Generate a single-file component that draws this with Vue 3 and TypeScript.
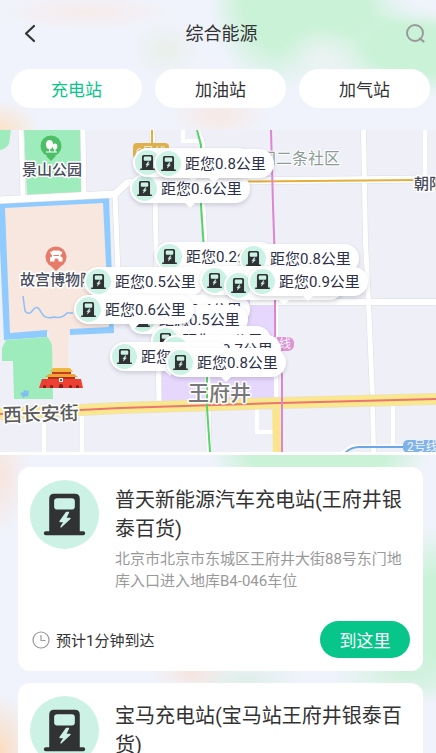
<script setup lang="ts">
import { ref } from 'vue'

interface Marker {
  x: number
  y: number
  distance: string
}

interface Station {
  name: string
  address: string
  minutes: number
}

const MAP_WIDTH = 436

const tabs: string[] = ['充电站', '加油站', '加气站']
const activeTab = ref<string>('充电站')

// x / y is the centre of the round icon; later markers lie over earlier ones
const markers: Marker[] = [
  { x: 144, y: 58, distance: '0.6' },
  { x: 147, y: 32, distance: '0.7' },
  { x: 168, y: 33, distance: '0.8' },
  { x: 169, y: 126, distance: '0.2' },
  { x: 253, y: 128, distance: '0.8' },
  { x: 185, y: 150, distance: '0.3' },
  { x: 98, y: 151, distance: '0.5' },
  { x: 144, y: 179, distance: '0.4' },
  { x: 214, y: 150, distance: '0.6' },
  { x: 238, y: 155, distance: '0.7' },
  { x: 262, y: 151, distance: '0.9' },
  { x: 142, y: 189, distance: '0.5' },
  { x: 88, y: 179, distance: '0.6' },
  { x: 165, y: 210, distance: '0.5' },
  { x: 175, y: 219, distance: '0.7' },
  { x: 124, y: 226, distance: '0.6' },
  { x: 180, y: 232, distance: '0.8' },
]

const stations: Station[] = [
  {
    name: '普天新能源汽车充电站(王府井银泰百货)',
    address: '北京市北京市东城区王府井大街88号东门地库入口进入地库B4-046车位',
    minutes: 1,
  },
  {
    name: '宝马充电站(宝马站王府井银泰百货)',
    address: '北京市北京市东城区王府井大街88号银泰百货地下停车场',
    minutes: 1,
  },
]

function place(m: Marker) {
  return { left: `${(m.x / MAP_WIDTH) * 100}%`, top: `${m.y}px` }
}
</script>

<template>
  <div class="page">
    <svg width="0" height="0" class="defs" aria-hidden="true">
      <symbol id="pump" viewBox="0 0 70 70">
        <circle cx="35" cy="35" r="35" fill="#ccf2e5" />
        <path
          d="M19.500 52V19q0-5 5-5h21q5 0 5 5v33h3.500q2 0 2 2t-2 2H16q-2 0-2-2t2-2z"
          fill="#303233"
        />
        <rect x="24.500" y="18.500" width="21" height="11.500" rx="3" fill="#ccf2e5" />
        <path
          d="M37 33L30.500 42h4.500L31.500 47.500L40.500 39H36L39 33z"
          fill="#ccf2e5"
          stroke="#ccf2e5"
          stroke-width="1.500"
          stroke-linejoin="round"
        />
      </symbol>
    </svg>

    <header class="top">
      <div class="bar">
        <button class="icon-btn" type="button" aria-label="返回">
          <svg width="20" height="20" viewBox="0 0 20 20">
            <path d="M16 2L8 9.500l8 7.500" fill="none" stroke="#333" stroke-width="2.200" stroke-linecap="round" stroke-linejoin="round" />
          </svg>
        </button>
        <h1>综合能源</h1>
        <button class="icon-btn" type="button" aria-label="搜索">
          <svg width="20" height="20" viewBox="0 0 20 20">
            <circle cx="10" cy="9" r="8" fill="none" stroke="#999" stroke-width="1.900" />
            <path d="M15 14.500l3.500 3" stroke="#999" stroke-width="2.200" stroke-linecap="round" />
          </svg>
        </button>
      </div>
      <nav class="tabs">
        <button
          v-for="tab in tabs"
          :key="tab"
          type="button"
          class="tab"
          :class="{ active: tab === activeTab }"
          @click="activeTab = tab"
        >
          {{ tab }}
        </button>
      </nav>
    </header>

    <section class="map" aria-label="地图">
      <svg class="canvas" viewBox="0 130 436 322" preserveAspectRatio="xMidYMid slice">
        <rect y="130" width="436" height="322" fill="#eeeff7" />
        <!-- areas -->
        <path d="M0 130h11l-2 14q-3 5-9 6z" fill="#9eecbb" />
        <path d="M24 130h57l1 63-55 2z" fill="#9eecbb" />
        <path d="M-2 202l111-5 5 136-44 2v-4H47v6l-43 3z" fill="#8fcbff" />
        <path d="M5 208l98-5 6 124-39 2-2 14v27H52l-3-36-2-4-37 3z" fill="#f8e7df" />
        <path d="M23 296l2 15q4 5 8-1t8 2 13 5q8 2 13-4h6" fill="none" stroke="#8fbff5" stroke-width="1.500" />
        <path d="M6 340l42-3 4 8 1 54H14l-1-38H2V348z" fill="#9eecbb" />
        <path d="M20 393l4-1-1-2 6 1-1 6-2-1-3 2-1-2z" fill="#82bff0" />
        <path d="M161 300h115v101l-114 4z" fill="#e6d8fd" />
        <!-- minor roads -->
        <g fill="none" stroke="#dcdde4" stroke-width="6">
          <path d="M21 130l2 68M83 130l1 66M115 194l4 105M152 130l3 62 2 108 2 105" />
          <path d="M0 200l115-6 12-11 6-1 303-3" stroke-width="8" />
          <path d="M250 302h186" stroke-width="7" />
          <path d="M363.500 130l2 112 3 60 4 95 1 55M425 130v50M393 403v42" />
          <path d="M198 130l5 15v60l3 60 3 187M44 412v40M82 412v40" />
        </g>
        <g fill="none" stroke="#fff" stroke-width="5">
          <path d="M21 130l2 68M83 130l1 66M115 194l4 105M152 130l3 62 2 108 2 105" />
          <path d="M0 200l115-6 12-11 6-1 303-3" stroke-width="7" />
          <path d="M250 302h186" stroke-width="6" />
          <path d="M363.500 130l2 112 3 60 4 95 1 55M425 130v50M393 403v42" />
          <path d="M198 130l5 15v60l3 60 3 187M44 412v40M82 412v40" />
          <path d="M183 130v11h17M257 405v27h18" stroke-width="4" />
          <path d="M340 454l12-8h84" stroke-width="3" />
          <path d="M276 300v104" stroke-width="4" />
        </g>
        <!-- main street -->
        <path d="M276 402l1 50" stroke="#fae58c" stroke-width="8" fill="none" />
        <path d="M0 414l120-6 160-5 156-4" stroke="#eee2b4" stroke-width="12" fill="none" />
        <path d="M0 414l120-6 160-5 156-4" stroke="#fbe88c" stroke-width="10" fill="none" />
        <path d="M0 414l120-6 160-5 156-4" stroke="#ea7571" stroke-width="2" fill="none" />
        <!-- metro lines -->
        <g fill="none" stroke-width="2">
          <path d="M152 130v20M133 182l114-0.500 170-1.500" stroke="#e5ad3b" />
          <path d="M197 130l4 15v60l3 45 3 125v32l3 45" stroke="#57d36a" />
          <path d="M271 130l2 75 2 60v75l7 35v77" stroke="#dd86cf" />
          <path d="M345 453q6-6 14-6h50" stroke="#6ba7e6" />
        </g>
        <rect x="133" y="143" width="36" height="16" rx="4" fill="#dfb14c" />
        <text x="151" y="157" class="badge-text" text-anchor="middle">6号线</text>
        <rect x="252" y="337" width="42" height="14" rx="6" fill="#dc94d3" />
        <text x="291" y="348" class="badge-text" text-anchor="end">5号线</text>
        <rect x="403" y="440" width="44" height="13" rx="5" fill="#7fb3e8" />
        <text x="407" y="451" class="badge-text">2号线</text>
        <!-- points of interest -->
        <path d="M51 161l-5-5h10z" fill="#4dbf66" />
        <circle cx="51" cy="146" r="10.500" fill="#4dbf66" />
        <g fill="#fff">
          <ellipse cx="49.500" cy="144.500" rx="3.500" ry="4.500" />
          <path d="M49 147h1.200v5H49zM54.300 148h1.200v4h-1.200zM46 151.500h11v1H46z" />
          <ellipse cx="55" cy="146.500" rx="2.300" ry="3" />
        </g>
        <path d="M56 271l-5-5h10z" fill="#e57b68" />
        <circle cx="56" cy="257" r="10.500" fill="#e57b68" />
        <path d="M50 251.500q2 1 3-1h6.500q1 2 3 1l-1 3h-1v2l2 1v4h-4v-2q-2-2-4 0v2h-4.500v-4l2-1v-2h-1z" fill="#fff" />
        <path d="M53.500 255.500h5.500" stroke="#e57b68" stroke-width="1" />
        <g>
          <path d="M53 368h17l3 4H50z" fill="#eeb83e" />
          <path d="M52 372h19v3H52z" fill="#c73b26" />
          <path d="M49 374h25l4 3H45z" fill="#efa52f" />
          <path d="M48 377h27v3H48z" fill="#b92d20" />
          <path d="M42 379h39l2 9H39z" fill="#ed3f32" />
          <path d="M43 388v-2q1.500-2 3 0v2zM50 388v-2q1.500-2 3 0v2zM59 388v-3q2-2 4 0v3zM69 388v-2q1.500-2 3 0v2zM76 388v-2q1.500-2 3 0v2z" fill="#7e2120" />
          <rect x="59" y="378" width="4" height="4" fill="#eee" />
          <rect x="60" y="379" width="2" height="2" fill="#536a7b" />
        </g>
        <!-- labels -->
        <g class="label">
          <text x="22" y="175" class="poi">景山公园</text>
          <text x="20" y="285" class="poi">故宫博物院</text>
          <text x="340" y="164" text-anchor="end" class="area">东四二条社区</text>
          <text x="414" y="189" class="poi">朝阳门</text>
          <text x="3" y="422" class="street" transform="rotate(-2 3 422)">西长安街</text>
          <text x="188" y="400" class="district">王府井</text>
        </g>
      </svg>

      <button v-for="(m, i) in markers" :key="i" type="button" class="marker" :style="place(m)">
        <svg class="marker-icon" aria-hidden="true"><use href="#pump" /></svg>
        <span>距您{{ m.distance }}公里</span>
      </button>
    </section>

    <main class="list">
      <article v-for="s in stations" :key="s.name" class="card">
        <div class="info">
          <svg class="logo" aria-hidden="true"><use href="#pump" /></svg>
          <div class="texts">
            <h2>{{ s.name }}</h2>
            <p>{{ s.address }}</p>
          </div>
        </div>
        <div class="foot">
          <svg width="18" height="18" viewBox="0 0 18 18" aria-hidden="true">
            <circle cx="9" cy="9" r="8" fill="none" stroke="#999" stroke-width="1.200" />
            <path d="M9 4v5.500h4.500" fill="none" stroke="#999" stroke-width="1.200" />
          </svg>
          <span class="eta">预计{{ s.minutes }}分钟到达</span>
          <button type="button" class="go">到这里</button>
        </div>
      </article>
    </main>
  </div>
</template>

<style>
body {
  margin: 0;
}
</style>

<style scoped>
.page {
  display: flex;
  flex-direction: column;
  height: 100vh;
  overflow: hidden;
  background: #f0f3fc;
  color: #333;
  font-family: Roboto, 'Noto Sans CJK SC', sans-serif;
}
.defs {
  position: absolute;
}
button {
  border: 0;
  margin: 0;
  padding: 0;
  font-family: inherit;
  color: inherit;
  cursor: pointer;
}
.top {
  flex: none;
  padding-bottom: 22px;
  background:
    radial-gradient(ellipse 44px 36px at 74% 60px, #eaf3f2 10%, transparent 100%),
    radial-gradient(ellipse 70px 30px at 100% 0, #f0f3fc 20%, transparent 100%),
    radial-gradient(ellipse 70px 90px at 64% 0, #c9f2d6 50%, transparent 100%),
    radial-gradient(ellipse 90px 70px at 76% 5px, #c9f2d6 40%, transparent 100%),
    radial-gradient(ellipse 90px 50px at 96% 48px, #c9f2d6 50%, transparent 100%),
    radial-gradient(ellipse 40px 30px at 0 100%, #fbe2c8, transparent),
    radial-gradient(ellipse 90px 20px at 20% 12px, #f6ebea, transparent),
    radial-gradient(ellipse 36px 30px at 38% 50px, #e9efe9, transparent),
    radial-gradient(ellipse 50px 26px at 50% 115px, #f7e8e3, transparent),
    #f0f3fc;
}
.bar {
  display: flex;
  align-items: center;
  justify-content: space-between;
  height: 68px;
  padding: 0 11px 0 18px;
}
.icon-btn {
  display: flex;
  background: none;
}
h1 {
  margin: 0;
  font-size: 18px;
  font-weight: 400;
  line-height: 24px;
}
.tabs {
  display: flex;
  gap: 13px;
  padding: 1px 6px 0 11px;
}
.tab {
  flex: 1;
  height: 39px;
  border-radius: 20px;
  background: #fff;
  font-size: 17px;
}
.tab.active {
  color: #08c58a;
}
.map {
  position: relative;
  flex: none;
  height: 322px;
  overflow: hidden;
  border-bottom: 3px solid #fff;
}
.canvas {
  display: block;
  width: 100%;
  height: 100%;
}
.label text {
  paint-order: stroke;
  stroke: #fff;
  stroke-width: 3px;
  stroke-linejoin: round;
}
.label .poi {
  font-size: 15px;
  font-weight: 500;
  fill: #474b5c;
}
.label .area {
  font-size: 16px;
  fill: #8a9d94;
  stroke-width: 2px;
}
.label .street {
  font-size: 19px;
  font-weight: 500;
  fill: #5b5b5b;
}
.label .district {
  font-size: 21px;
  font-weight: 500;
  fill: #777;
}
.badge-text {
  font-size: 12px;
  fill: #f4f4fa;
}
.marker {
  position: absolute;
  display: flex;
  align-items: center;
  gap: 4px;
  width: 120px;
  height: 29px;
  margin: -14px 0 0 -14px;
  padding-left: 2px;
  border-radius: 15px;
  background: #fff;
  box-shadow: 0 2px 4px rgba(60, 60, 80, 0.2);
  color: #2c3048;
  font-size: 15px;
  line-height: 18px;
  white-space: nowrap;
}
.marker::after {
  content: '';
  position: absolute;
  top: 100%;
  left: 50%;
  margin-left: -5px;
  border: 5px solid transparent;
  border-top-color: #fff;
  border-bottom: 0;
}
.marker-icon {
  flex: none;
  width: 25px;
  height: 25px;
}
.list {
  flex: 1;
  display: flex;
  flex-direction: column;
  gap: 12px;
  min-height: 0;
  padding: 12px 13px 12px 18px;
  overflow-y: auto;
  scrollbar-width: none;
  background:
    radial-gradient(ellipse 110px 40px at 73% 0, #c9f2d6 60%, transparent 100%),
    radial-gradient(ellipse 60px 90px at 100% 160px, #c9f2d6 40%, transparent 100%),
    radial-gradient(ellipse 70px 30px at 92% 218px, #d2f1de, transparent),
    radial-gradient(ellipse 40px 20px at 44% 218px, #f6e4df, transparent),
    radial-gradient(ellipse 60px 20px at 56% 224px, #deeee8, transparent),
    radial-gradient(ellipse 30px 60px at 0 20px, #f8e4dd, transparent),
    radial-gradient(ellipse 34px 60px at 0 100%, #fbdcc0, transparent),
    #f0f3fc;
}
.card {
  flex: none;
  padding: 13px 13px 13px 12px;
  border-radius: 12px;
  background: #fff;
}
.info {
  display: flex;
  gap: 16px;
  min-height: 141px;
}
.logo {
  flex: none;
  width: 69px;
  height: 69px;
}
.texts {
  flex: 1;
  padding: 6px 5px 0 0;
}
h2 {
  margin: 0;
  font-size: 20px;
  font-weight: 400;
  line-height: 29px;
}
p {
  margin: 4px 0 0;
  color: #999;
  font-size: 15px;
  line-height: 22px;
}
.foot {
  display: flex;
  align-items: center;
  gap: 6px;
  padding-left: 2px;
}
.eta {
  flex: 1;
  font-size: 15px;
}
.go {
  width: 90px;
  height: 37px;
  border-radius: 19px;
  background: #08c58a;
  color: #fff;
  font-size: 17px;
}
</style>
